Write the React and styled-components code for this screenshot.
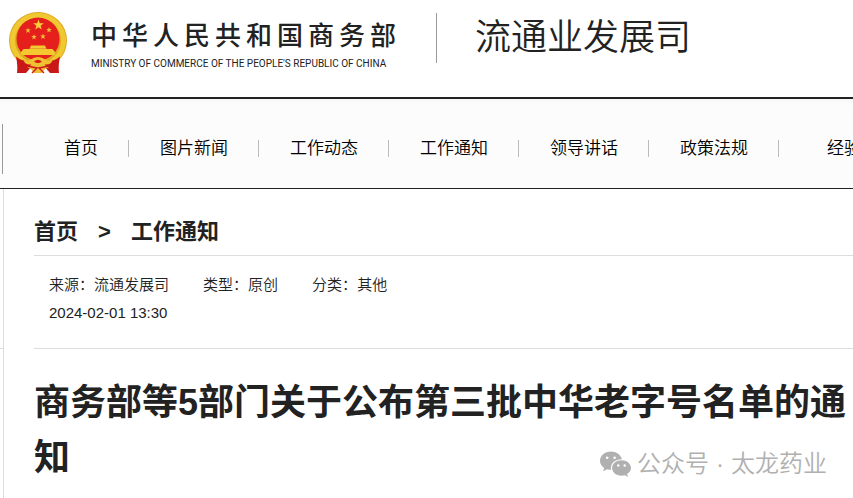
import React from "react";
import styled, { createGlobalStyle } from "styled-components";

const NAV_ITEMS = ["首页", "图片新闻", "工作动态", "工作通知", "领导讲话", "政策法规"];

const META = [
  { label: "来源", value: "流通发展司" },
  { label: "类型", value: "原创" },
  { label: "分类", value: "其他" }
];

const star = (cx, cy, r) =>
  Array.from({ length: 10 }, (_, i) => {
    const radius = i % 2 ? r * 0.4 : r;
    const angle = (Math.PI / 5) * i - Math.PI / 2;
    return `${cx + radius * Math.cos(angle)},${cy + radius * Math.sin(angle)}`;
  }).join(" ");

const Emblem = () => (
  <EmblemSvg viewBox="0 0 58 62" role="img" aria-label="国徽">
    <ellipse cx="29" cy="28.5" rx="29" ry="28.5" fill="#dfa91f" />
    <ellipse cx="29" cy="28.5" rx="25.5" ry="25" fill="none" stroke="#f0c832" strokeWidth="5" />
    <ellipse cx="29" cy="27" rx="21.5" ry="21.5" fill="#e51f1b" />
    <polygon points={star(29.5, 13, 5.5)} fill="#f7d23c" />
    <polygon points={star(19, 18.5, 3)} fill="#f2bd3c" />
    <polygon points={star(40, 18, 3)} fill="#f2bd3c" />
    <polygon points={star(25, 25, 3)} fill="#f2bd3c" />
    <polygon points={star(34, 24.5, 3)} fill="#f2bd3c" />
    <path d="M22 33.5 H36 L37.5 37 H43.5 L46 40 V43 H12 V40 L14.5 37 H20.5 Z" fill="#f4c830" />
    <path d="M21 36.5 H37" stroke="#dc9a25" strokeWidth="0.8" />
    <path d="M7 44.5 Q12 49 20 49 L23 54 L17 61 H8 Q9 54 7 44.5 Z" fill="#c91818" />
    <path d="M51 44.5 Q46 49 38 49 L35 54 L41 61 H50 Q49 54 51 44.5 Z" fill="#c91818" />
    <path d="M14 47 Q18 50 21 48 Q29 42 37 48 Q40 50 44 47 L42 51 Q37 54 32 51 Q29 49 26 51 Q21 54 16 51 Z" fill="#f0c030" />
    <path d="M18 55 Q23 52 29 52 Q35 52 40 55 L36 57 L33 61 H25 L22 57 Z" fill="#eebd35" />
    <path d="M25 49.5 Q29 46 33 49.5 Q29 53 25 49.5 Z" fill="#d81e1a" />
    <path d="M18 54 L28 56 L23 61 M40 54 L30 56 L35 61" fill="none" stroke="#c91818" strokeWidth="1.4" />
  </EmblemSvg>
);

const WechatIcon = () => (
  <WechatSvg viewBox="0 0 31 26" aria-hidden="true">
    <path
      fill="#b0b0b0"
      d="M11 0.5C4.9 0.5 0 4.6 0 9.8c0 3 1.6 5.5 4.2 7.2L3 20.3l4.2-2.1c1.3 0.4 2.6 0.6 4 0.6-0.2-0.7-0.3-1.3-0.3-1.9 0-4.9 4.7-8.7 10.4-8.7h0.6C20.8 3.8 16.4 0.5 11 0.5Z"
    />
    <path
      fill="#b0b0b0"
      d="M21.5 9.3c-5.3 0-9.4 3.4-9.4 7.7 0 4.3 4.1 7.7 9.4 7.7 1.2 0 2.3-0.2 3.3-0.5l3.2 1.7-0.9-2.9C29.4 21.6 31 19.5 31 17c0-4.3-4.2-7.7-9.5-7.7Z"
    />
    <circle cx="7.2" cy="6.8" r="1.3" fill="#fff" />
    <circle cx="14.6" cy="6.8" r="1.3" fill="#fff" />
    <circle cx="18.3" cy="14.5" r="1.2" fill="#fff" />
    <circle cx="24.7" cy="14.5" r="1.2" fill="#fff" />
  </WechatSvg>
);

const App = () => (
  <>
    <GlobalStyle />
    <Header>
      <Brand href="#">
        <Emblem />
        <BrandText>
          <BrandName>中华人民共和国商务部</BrandName>
          <BrandSub>MINISTRY OF COMMERCE OF THE PEOPLE'S REPUBLIC OF CHINA</BrandSub>
        </BrandText>
      </Brand>
      <Department>流通业发展司</Department>
    </Header>
    <Nav>
      <NavList>
        {NAV_ITEMS.map(item => (
          <NavItem key={item}>
            <NavLink href="#">{item}</NavLink>
          </NavItem>
        ))}
        <NavItem $wide>
          <NavLink href="#">经验</NavLink>
        </NavItem>
      </NavList>
    </Nav>
    <Body>
      <Side />
      <Content>
        <Breadcrumb>
          <a href="#">首页</a>
          <span>&gt;</span>
          <a href="#">工作通知</a>
        </Breadcrumb>
        <Meta>
          <MetaRow>
            {META.map(({ label, value }) => (
              <span key={label}>
                {label}：{value}
              </span>
            ))}
          </MetaRow>
          <MetaRow>
            <time dateTime="2024-02-01T13:30">2024-02-01 13:30</time>
          </MetaRow>
        </Meta>
        <Title>商务部等5部门关于公布第三批中华老字号名单的通知</Title>
      </Content>
    </Body>
    <Watermark>
      <WechatIcon />
      <WatermarkText>
        <span>公众号</span>
        <span>·</span>
        <span>太龙药业</span>
      </WatermarkText>
    </Watermark>
  </>
);

export default App;

const GlobalStyle = createGlobalStyle`
  * {
    box-sizing: border-box;
  }

  html, body, #root {
    height: 100%;
  }

  body {
    margin: 0;
    overflow: hidden;
    background: #fff;
    color: #222;
    font-family: "Liberation Sans", "Noto Sans CJK SC", sans-serif;
  }

  #root {
    display: flex;
    flex-direction: column;
  }

  a {
    color: inherit;
    text-decoration: none;
  }
`;

const Header = styled.header`
  display: flex;
  align-items: flex-start;
  flex-shrink: 0;
  height: 99px;
  padding: 12px 9px 0;
  border-bottom: 2px solid #222;
`;

const Brand = styled.a`
  display: flex;
  gap: 24px;
`;

const EmblemSvg = styled.svg`
  width: 58px;
  height: 62px;
  flex-shrink: 0;
`;

const BrandText = styled.div`
  width: 345px;
  padding-top: 6px;
  white-space: nowrap;
`;

const BrandName = styled.div`
  font-size: 26px;
  font-weight: 500;
  line-height: 36px;
  letter-spacing: 5px;
`;

const BrandSub = styled.div`
  font-family: Roboto, "Liberation Sans", sans-serif;
  font-size: 10px;
  line-height: 20px;
`;

const Department = styled.h1`
  margin: 1px 0 0;
  padding-left: 38px;
  border-left: 1px solid #999;
  font-size: 36px;
  font-weight: 350;
  line-height: 50px;
`;

const Nav = styled.nav`
  display: flex;
  align-items: center;
  flex-shrink: 0;
  height: 90px;
  padding: 10px 0 0 2px;
  overflow: hidden;
  background: linear-gradient(#f7f7f7, #fcfcfc 6px);
  border-bottom: 1px solid #222;
`;

const NavList = styled.ul`
  display: flex;
  align-items: center;
  height: 50px;
  margin: 0;
  padding: 0 0 0 31px;
  border-left: 1px solid #999;
  list-style: none;
`;

const NavItem = styled.li`
  flex-shrink: 0;
  padding: 0 30px 0 ${props => (props.$wide ? 48 : 31)}px;
  border-right: 1px solid #bbb;
  line-height: 17px;

  &:first-child {
    padding-left: 30px;
  }
`;

const NavLink = styled.a`
  color: #000;
  font-size: 17px;
  font-weight: 350;
  white-space: nowrap;
`;

const Body = styled.div`
  display: flex;
  flex: 1;
`;

const Side = styled.aside`
  width: 3px;
  height: 160px;
  border-bottom: 1px solid #ddd;
`;

const Content = styled.main`
  flex: 1;
  padding-left: 30px;
  border-left: 1px solid #ddd;
`;

const Breadcrumb = styled.div`
  display: flex;
  gap: 20px;
  padding: 27px 0 7px;
  border-bottom: 1px solid #ddd;
  font-size: 22px;
  font-weight: 700;
  line-height: 32px;
`;

const Meta = styled.div`
  padding: 15px 15px 21px;
  border-bottom: 1px solid #ddd;
  font-size: 15px;
  font-weight: 350;
  line-height: 28px;
`;

const MetaRow = styled.div`
  display: flex;
  gap: 34px;
`;

const Title = styled.h2`
  margin: 26px 0 0;
  font-size: 36px;
  font-weight: 700;
  line-height: 55px;
`;

const Watermark = styled.div`
  position: absolute;
  right: 26px;
  bottom: 16px;
  display: flex;
  align-items: center;
  gap: 6px;
  color: #b0b0b0;
  pointer-events: none;
`;

const WechatSvg = styled.svg`
  width: 31px;
  height: 26px;
`;

const WatermarkText = styled.div`
  display: flex;
  gap: 7px;
  font-size: 24px;
  font-weight: 350;
  line-height: 36px;
`;
